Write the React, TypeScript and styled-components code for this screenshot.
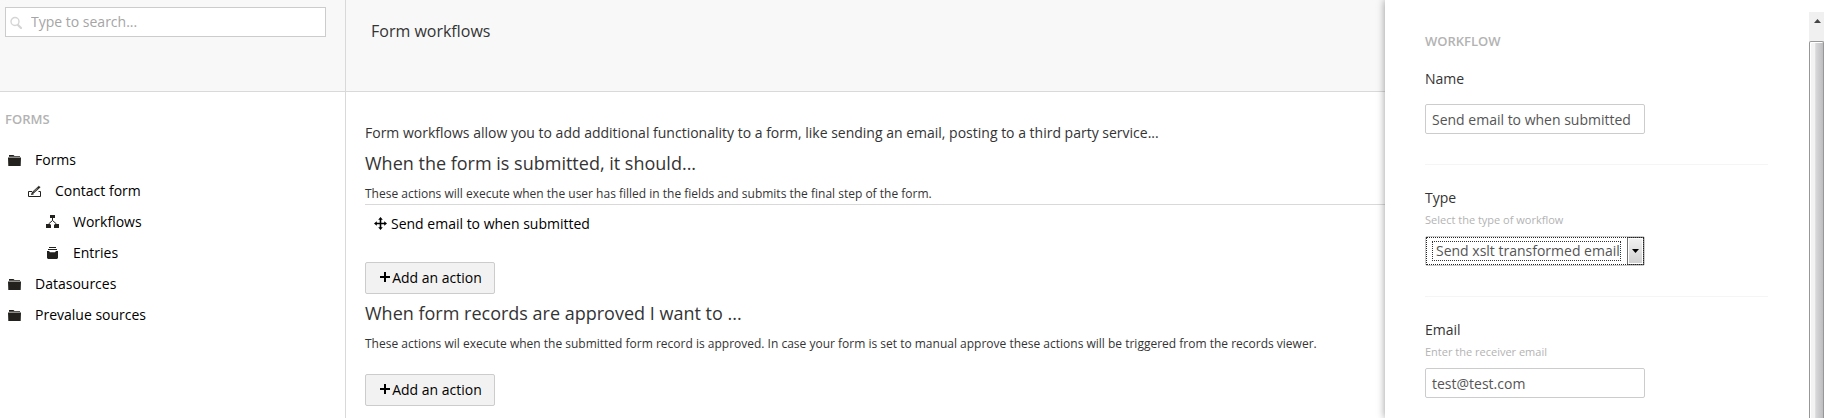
import React from "react";
import styled, { createGlobalStyle } from "styled-components";

const GlobalStyle = createGlobalStyle`
  *, *::before, *::after { box-sizing: border-box; }
  body {
    margin: 0;
    background: #fff;
    color: #343434;
    font: 14px/20px "Open Sans", "Noto Sans", sans-serif;
  }
  h1, h2, p, ul { margin: 0; padding: 0; font-weight: 400; }
  ul { list-style: none; }
  button, input, select { font: inherit; margin: 0; }
`;

const Page = styled.div`
  display: flex;
  min-height: 100vh;
`;

const Sidebar = styled.aside`
  flex: 0 0 346px;
  border-right: 1px solid #d9d9d9;
`;

const HeaderBar = styled.header`
  height: 92px;
  background: #f8f8f8;
  border-bottom: 1px solid #d9d9d9;
`;

const SearchHeader = styled(HeaderBar)`
  padding: 7px 19px 0 5px;
`;

const SearchBox = styled.label`
  display: flex;
  align-items: center;
  height: 30px;
  padding: 0 4px;
  gap: 9px;
  border: 1px solid #ccc;
  background: #fff;
`;

const SearchInput = styled.input`
  flex: 1;
  min-width: 0;
  border: 0;
  padding: 0;
  outline: 0;
  background: none;
  &::placeholder { color: #a5a5a5; opacity: 1; }
`;

const GroupTitle = styled.h2`
  color: #b3b3b3;
  font-size: 13px;
  font-weight: 600;
  line-height: 20px;
  text-transform: uppercase;
`;

const TreeNav = styled.nav`
  padding: 17px 0 0 5px;
`;

const Tree = styled.ul`
  padding-top: 15px;
`;

const TreeLink = styled.a<{ $depth: number }>`
  display: flex;
  align-items: center;
  height: 31px;
  gap: 14px;
  padding-left: ${(p) => 3 + [0, 20, 38][p.$depth]}px;
  color: #000;
  text-decoration: none;
`;

const Main = styled.main`
  flex: 1;
  min-width: 0;
`;

const MainHeader = styled(HeaderBar)`
  padding: 21px 25px;
`;

const PageTitle = styled.h1`
  font-size: 16px;
  line-height: 20px;
`;

const Content = styled.div`
  padding: 31px 0 8px 19px;
`;

const Intro = styled.p`
  padding-bottom: 1px;
`;

const Section = styled.section`
  padding-top: 9px;
`;

const SectionTitle = styled.h2`
  font-size: 18px;
  line-height: 20px;
`;

const SectionNote = styled.p`
  padding-top: 11px;
  font-size: 12px;
  line-height: 20px;
  white-space: nowrap;
`;

const ActionList = styled.ul`
  border-top: 1px solid #d9d9d9;
  margin-bottom: 20px;
`;

const ActionItem = styled.li`
  display: flex;
  align-items: center;
  gap: 4px;
  height: 37px;
  padding-left: 9px;
  color: #000;
`;

const AddButton = styled.button<{ $spaced?: boolean }>`
  display: flex;
  align-items: center;
  justify-content: center;
  gap: 2px;
  width: 130px;
  height: 32px;
  margin-top: ${(p) => (p.$spaced ? 20 : 0)}px;
  padding: 0 0 0 2px;
  border: 1px solid #ccc;
  border-radius: 2px;
  background: #f2f2f2;
  color: #000;
`;

const Panel = styled.aside`
  position: relative;
  display: flex;
  flex: 0 0 439px;
  background: #fff;
  box-shadow: 0 0 8px rgba(0, 0, 0, 0.4);
`;

const PanelForm = styled.form`
  flex: 1;
  padding: 31px 41px 0 40px;
`;

const Field = styled.div`
  padding: 23px 0 30px;
  & + & { border-top: 1px solid #f5f5f5; }
  &:last-child { padding-bottom: 16px; }
`;

const FieldLabel = styled.label`
  display: block;
`;

const FirstField = styled.div`
  padding: 18px 0 30px;
  border-bottom: 1px solid #f5f5f5;
`;

const Help = styled.p`
  padding-top: 2px;
  color: #b3b3b3;
  font-size: 11px;
  line-height: 20px;
`;

const TextInput = styled.input<{ $gap: number }>`
  display: block;
  width: 220px;
  height: 30px;
  margin-top: ${(p) => p.$gap}px;
  padding: 0 6px;
  border: 1px solid #ccc;
  border-radius: 2px;
  background: #fff;
  color: #555;
`;

const SelectBox = styled.div`
  display: flex;
  width: 220px;
  height: 30px;
  margin-top: 6px;
  border: 1px solid #ccc;
  border-radius: 2px;
  outline: 1px dotted #222;
  outline-offset: -2px;
`;

const Select = styled.select`
  flex: 1;
  min-width: 0;
  margin: 4px 6px;
  padding: 0 0 0 3px;
  border: 1px dotted #333;
  border-radius: 0;
  outline: 0;
  appearance: none;
  background: #fff;
  color: #555;
  line-height: 18px;
`;

const SelectArrow = styled.span`
  display: grid;
  place-items: center;
  width: 17px;
  border: 1px solid #707070;
  box-shadow: inset 0 0 0 1px #fff;
  background: linear-gradient(#f2f2f2, #cfcfcf);
  pointer-events: none;
`;

const Scrollbar = styled.div`
  display: flex;
  flex-direction: column;
  width: 15px;
  margin-top: 12px;
  background: #f0f0f0;
`;

const ScrollUp = styled.button`
  display: grid;
  place-items: center;
  height: 29px;
  padding: 0 0 11px 2px;
  border: 0;
  background: none;
`;

const ScrollThumb = styled.div`
  flex: 1;
  border: 1px solid #979797;
  border-bottom: 0;
  border-radius: 2px 2px 0 0;
  box-shadow: inset 1px 1px 0 #fff;
  background: linear-gradient(90deg, #f3f3f3 0 35%, #d8d8da 45%, #bdbdc1);
`;

const SearchIcon = () => (
  <svg width="12" height="13" viewBox="0 0 12 13" fill="none" stroke="#d5d5d5" aria-hidden="true">
    <circle cx="5" cy="5.5" r="4" strokeWidth="1.4" />
    <path d="M8 9l3 3" strokeWidth="2.2" strokeLinecap="round" />
  </svg>
);

const FolderIcon = () => (
  <svg width="13" height="12" viewBox="0 0 13 12" fill="#23211d" aria-hidden="true">
    <path d="M1 2.2V1h4.500l1 1H12v.8H1zM0 3.400h13L12.700 12H.3z" />
  </svg>
);

const EditIcon = () => (
  <svg width="13" height="12" viewBox="0 0 13 12" fill="none" stroke="#23211d" aria-hidden="true">
    <path d="M4 6.500H.5v5h12v-5H10.500" />
    <path d="M3.300 9.200l1-2.200L10.800 1l1.500 1.200-6.800 6.200z" fill="#23211d" strokeWidth=".3" />
    <path d="M5.500 7l4-3.600" stroke="#fff" strokeWidth=".5" />
    <path d="M3 9.400h2.500" strokeWidth=".8" />
  </svg>
);

const WorkflowIcon = () => (
  <svg width="13" height="13" viewBox="0 0 13 13" fill="#23211d" aria-hidden="true">
    <path d="M4 0h5v3H4zM0 9h4l1 1v3H0zM9 9h4v4H8v-3z" />
    <path d="M6.500 3v2.500L2.500 9M6.500 5.500l4 3.500" fill="none" stroke="#23211d" strokeWidth="1" />
  </svg>
);

const EntriesIcon = () => (
  <svg width="13" height="12" viewBox="0 0 13 12" fill="#23211d" aria-hidden="true">
    <path d="M3 0h7v1H3zM2 2h9v1H2z" />
    <path d="M1 4h2l1 1.200h5L10 4h2v7l-1 1H2l-1-1z" />
  </svg>
);

const MoveIcon = () => (
  <svg width="13" height="13" viewBox="0 0 13 13" fill="#000" aria-hidden="true">
    <path d="M6.500 0l2.300 2.800H7.300v2.900h2.900V4.200L13 6.500l-2.800 2.300V7.300H7.300v2.900h1.500L6.500 13l-2.300-2.800h1.500V7.300H2.800v1.500L0 6.500l2.800-2.300v1.500h2.900V2.800H4.200z" />
  </svg>
);

const PlusIcon = () => (
  <svg width="10" height="12" viewBox="0 0 10 12" fill="#000" aria-hidden="true">
    <path d="M4 0h2v4h4v2H6v4H4V6H0V4h4z" />
  </svg>
);

const nodes = [
  { label: "Forms", depth: 0, Icon: FolderIcon },
  { label: "Contact form", depth: 1, Icon: EditIcon },
  { label: "Workflows", depth: 2, Icon: WorkflowIcon },
  { label: "Entries", depth: 2, Icon: EntriesIcon },
  { label: "Datasources", depth: 0, Icon: FolderIcon },
  { label: "Prevalue sources", depth: 0, Icon: FolderIcon },
];

export default function App() {
  return (
    <Page>
      <GlobalStyle />
      <Sidebar>
        <SearchHeader>
          <SearchBox>
            <SearchIcon />
            <SearchInput type="text" placeholder="Type to search..." aria-label="Search" />
          </SearchBox>
        </SearchHeader>
        <TreeNav>
          <GroupTitle>Forms</GroupTitle>
          <Tree>
            {nodes.map(({ label, depth, Icon }) => (
              <li key={label}>
                <TreeLink href="#" $depth={depth}>
                  <Icon />
                  {label}
                </TreeLink>
              </li>
            ))}
          </Tree>
        </TreeNav>
      </Sidebar>

      <Main>
        <MainHeader>
          <PageTitle>Form workflows</PageTitle>
        </MainHeader>
        <Content>
          <Intro>
            Form workflows allow you to add additional functionality to a form, like sending an
            email, posting to a third party service...
          </Intro>
          <Section>
            <SectionTitle>When the form is submitted, it should...</SectionTitle>
            <SectionNote>
              These actions will execute when the user has filled in the fields and submits the
              final step of the form.
            </SectionNote>
            <ActionList>
              <ActionItem>
                <MoveIcon />
                Send email to when submitted
              </ActionItem>
            </ActionList>
            <AddButton type="button">
              <PlusIcon />
              Add an action
            </AddButton>
          </Section>
          <Section>
            <SectionTitle>When form records are approved I want to ...</SectionTitle>
            <SectionNote>
              These actions wil execute when the submitted form record is approved. In case your
              form is set to manual approve these actions will be triggered from the records viewer.
            </SectionNote>
            <AddButton type="button" $spaced>
              <PlusIcon />
              Add an action
            </AddButton>
          </Section>
        </Content>
      </Main>

      <Panel>
        <PanelForm>
          <GroupTitle>Workflow</GroupTitle>
          <FirstField>
            <FieldLabel htmlFor="name">Name</FieldLabel>
            <TextInput id="name" type="text" defaultValue="Send email to when submitted" $gap={15} />
          </FirstField>
          <Field>
            <FieldLabel htmlFor="type">Type</FieldLabel>
            <Help>Select the type of workflow</Help>
            <SelectBox>
              <Select id="type" defaultValue="xslt">
                <option value="xslt">Send xslt transformed email</option>
              </Select>
              <SelectArrow>
                <svg width="7" height="4" viewBox="0 0 7 4" aria-hidden="true">
                  <path d="M0 0h7L3.500 4z" />
                </svg>
              </SelectArrow>
            </SelectBox>
          </Field>
          <Field>
            <FieldLabel htmlFor="email">Email</FieldLabel>
            <Help>Enter the receiver email</Help>
            <TextInput id="email" type="email" defaultValue="test@test.com" $gap={6} />
          </Field>
        </PanelForm>
        <Scrollbar>
          <ScrollUp type="button" aria-label="Scroll up">
            <svg width="7" height="4" viewBox="0 0 7 4" fill="#444" aria-hidden="true">
              <path d="M0 4h7L3.500 0z" />
            </svg>
          </ScrollUp>
          <ScrollThumb />
        </Scrollbar>
      </Panel>
    </Page>
  );
}
